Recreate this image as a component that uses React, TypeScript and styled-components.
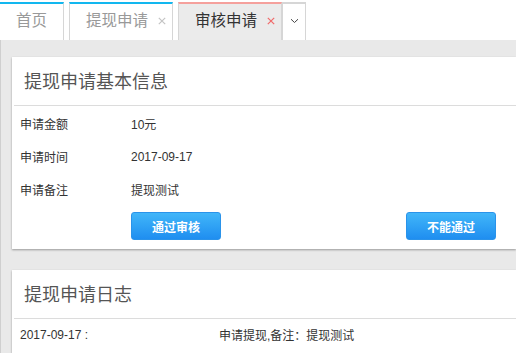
import React from "react";
import styled, { createGlobalStyle } from "styled-components";

const Global = createGlobalStyle`
  html, body { margin: 0; padding: 0; background: #fff; }
  body { font-family: "Liberation Sans", "Noto Sans CJK SC", sans-serif; overflow: hidden; }
  * { box-sizing: border-box; }
`;

const TabBar = styled.div`
  display: flex;
  align-items: flex-end;
  height: 40px;
  padding-top: 2px;
  background: #fff;
`;

const Tab = styled.div<{ $active?: boolean; $width: number; $accent: string; $gap?: number; $center?: boolean }>`
  display: flex;
  align-items: center;
  justify-content: ${(p) => (p.$center ? "center" : "flex-start")};
  gap: 10px;
  width: ${(p) => p.$width}px;
  height: 38px;
  margin-right: ${(p) => p.$gap ?? 0}px;
  padding-left: ${(p) => (p.$center ? 0 : 16)}px;
  border-top: 2px solid ${(p) => p.$accent};
  border-left: 1px solid #d6d6d6;
  border-right: 1px solid #d6d6d6;
  background: ${(p) => (p.$active ? "#ebebeb" : "#fff")};
  color: ${(p) => (p.$active ? "#333" : "#999")};
  font-size: 15.5px;
  line-height: 1;
  padding-bottom: 2px;
  &:first-child { border-left: none; }
`;

const Close = ({ active }: { active?: boolean }) => (
  <svg width="8" height="8" viewBox="0 0 8 8">
    <path
      d="M0.8 0.8 L7.2 7.2 M7.2 0.8 L0.8 7.2"
      stroke={active ? "#f06a6a" : "#c4c4c4"}
      strokeWidth="1.2"
      fill="none"
    />
  </svg>
);

const Content = styled.div`
  background: #e9e9e9;
  border-left: 1px solid #cfcfcf;
  padding: 17px 0 0 11px;
  display: flex;
  flex-direction: column;
  gap: 21px;
  height: 313px;
`;

const Card = styled.div`
  background: #fff;
  box-shadow: 0 1px 2px rgba(0, 0, 0, 0.35);
`;

const CardHeader = styled.div`
  height: 48px;
  display: flex;
  align-items: center;
  padding: 0 0 3px 12px;
  font-size: 18px;
  color: #555;
`;

const Divider = styled.div`
  height: 1px;
  margin-left: 2px;
  background: #dcdcdc;
`;

const Rows = styled.div`
  padding: 1px 0 7px 8px;
`;

const Row = styled.div`
  display: grid;
  grid-template-columns: 111px 1fr;
  height: 33px;
  align-items: center;
  font-size: 12px;
  color: #333;
`;

const Actions = styled.div`
  display: flex;
  justify-content: space-between;
  padding: 6px 20px 2px 111px;
`;

const Button = styled.button`
  width: 90px;
  height: 28px;
  border: 1px solid #2a93ea;
  border-radius: 3px;
  background: linear-gradient(#41b6f9, #1f8ef0);
  color: #fff;
  font-family: inherit;
  font-size: 12px;
  font-weight: bold;
  padding: 0;
`;

const LogRow = styled.div`
  display: grid;
  grid-template-columns: 199px 1fr;
  height: 34px;
  align-items: center;
  padding: 0 0 3px 8px;
  font-size: 12px;
  color: #333;
`;

const Chevron = () => (
  <svg width="9" height="6" viewBox="0 0 9 6">
    <path d="M1 1.2 L4.5 4.5 L8 1.2" fill="none" stroke="#444" strokeWidth="1" />
  </svg>
);

export default function App() {
  const info = [
    ["申请金额", "10元"],
    ["申请时间", "2017-09-17"],
    ["申请备注", "提现测试"],
  ];
  return (
    <>
      <Global />
      <TabBar>
        <Tab $width={64} $accent="#12b7ef" $gap={5}>首页</Tab>
        <Tab $width={104} $accent="#12b7ef" $gap={5}>
          提现申请<Close />
        </Tab>
        <Tab $width={104} $accent="#f5a09c" $active>
          审核申请<Close active />
        </Tab>
        <Tab $width={24} $accent="#d6d6d6" $center>
          <Chevron />
        </Tab>
      </TabBar>
      <Content>
        <Card>
          <CardHeader>提现申请基本信息</CardHeader>
          <Divider />
          <Rows>
            {info.map(([k, v]) => (
              <Row key={k}>
                <span>{k}</span>
                <span>{v}</span>
              </Row>
            ))}
            <Actions>
              <Button>通过审核</Button>
              <Button>不能通过</Button>
            </Actions>
          </Rows>
        </Card>
        <Card>
          <CardHeader>提现申请日志</CardHeader>
          <Divider />
          <LogRow>
            <span>2017-09-17 :</span>
            <span>申请提现,备注：提现测试</span>
          </LogRow>
        </Card>
      </Content>
    </>
  );
}
